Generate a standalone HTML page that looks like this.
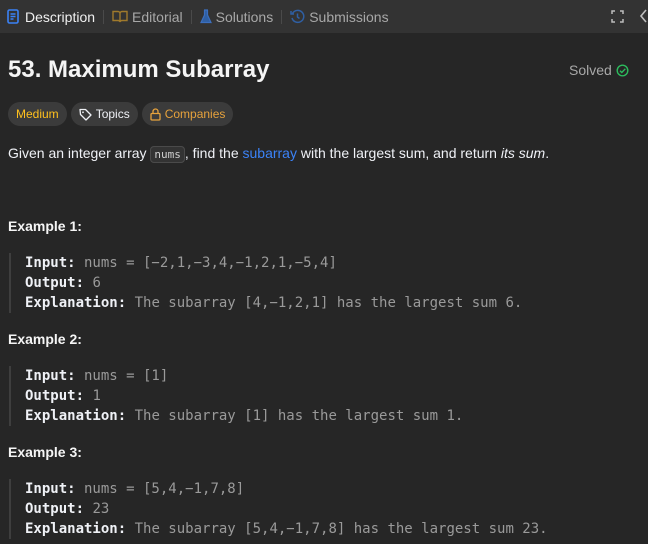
<!DOCTYPE html>
<html><head><meta charset="utf-8"><style>
*{margin:0;padding:0;box-sizing:border-box}
body{width:648px;height:544px;overflow:hidden;background:#262626;font-family:"Liberation Sans",sans-serif;color:#eff1f6}
.top{position:absolute;left:0;top:0;width:648px;height:33px;background:#333333;display:flex;align-items:center;font-size:14px}
.tab{display:flex;align-items:center;gap:4px;color:#a8a8a8}
.sep{width:1px;height:14px;background:#4a4a4a;margin:0 8px}
h1{position:absolute;left:8px;top:56px;font-size:24px;font-weight:bold;color:#f5f5f5}
.solved{position:absolute;left:569px;top:62px;font-size:14px;color:#a8a8a8;display:flex;align-items:center;gap:4px}
.tags{position:absolute;left:8px;top:102px;display:flex;gap:4px}
.tag{height:24px;border-radius:12px;background:#3b3b3b;font-size:12px;padding:0 8px;display:flex;align-items:center;gap:4px}
p.d{position:absolute;left:8px;top:145px;font-size:14px;color:#eff1f6}
code.i{font-family:"DejaVu Sans Mono",monospace;font-size:11px;background:#333;border:1px solid #4a4a4a;border-radius:4px;padding:1px 3px;color:#d0d0d0}
.ex{position:absolute;left:8px;font-size:14px;font-weight:bold;color:#f5f5f5}
.pre{position:absolute;left:9px;border-left:2px solid #3e3e3e;padding-left:14px;font-family:"DejaVu Sans Mono",monospace;font-size:14px;line-height:20px;color:#9a9a9a;white-space:pre}
.pre b{color:#eff1f6}
</style></head><body>
<div class="top">
 <div class="tab" style="margin-left:7px;color:#f0f0f0">
  <svg width="12" height="15" viewBox="0 0 12 15"><rect x="1" y="1" width="10" height="13" rx="1.5" fill="none" stroke="#3b82f6" stroke-width="1.6"/><path d="M3.5 5h5M3.5 7.5h5M3.5 10h3" stroke="#3b82f6" stroke-width="1.4"/></svg>
  <span style="margin-left:2px">Description</span></div>
 <div class="sep"></div>
 <div class="tab"><svg width="16" height="13" viewBox="0 0 16 13"><path d="M1 1.5h5a2 2 0 0 1 2 2V12a2 2 0 0 0-2-1.5H1zM15 1.5h-5a2 2 0 0 0-2 2V12a2 2 0 0 1 2-1.5h5z" fill="none" stroke="#a07a2c" stroke-width="1.4"/></svg>Editorial</div>
 <div class="sep"></div>
 <div class="tab"><svg width="12" height="15" viewBox="0 0 12 15"><path d="M4 1h4M4.5 1v5L1 13.5h10L7.5 6V1" fill="#2f5fa3" stroke="#3b6fbf" stroke-width="1.2"/></svg>Solutions</div>
 <div class="sep"></div>
 <div class="tab"><svg width="15" height="15" viewBox="0 0 15 15"><path d="M2.5 4.5A6 6 0 1 1 2 9" fill="none" stroke="#2f5fa3" stroke-width="1.5"/><path d="M1 2v3h3" fill="none" stroke="#2f5fa3" stroke-width="1.5"/><path d="M7.5 4.5v3.5l2 1.5" fill="none" stroke="#2f5fa3" stroke-width="1.5"/></svg>Submissions</div>
 <svg style="position:absolute;left:611px;top:10px" width="13" height="13" viewBox="0 0 13 13"><path d="M1 4V1h3M9 1h3v3M12 9v3H9M4 12H1V9" fill="none" stroke="#bdbdbd" stroke-width="1.5"/></svg>
 <svg style="position:absolute;left:639px;top:9px" width="9" height="14" viewBox="0 0 9 14"><path d="M7 1L2 7l5 6" fill="none" stroke="#bdbdbd" stroke-width="1.6"/></svg>
</div>
<h1>53. Maximum Subarray</h1>
<div class="solved">Solved <svg width="13" height="13" viewBox="0 0 13 13"><circle cx="6.5" cy="6.5" r="5.3" fill="none" stroke="#2cbb5d" stroke-width="1.4"/><path d="M4 6.7l1.8 1.8L9.3 4.8" fill="none" stroke="#2cbb5d" stroke-width="1.4"/></svg></div>
<div class="tags">
 <div class="tag" style="color:#ffc01e">Medium</div>
 <div class="tag" style="color:#eff1f6"><svg width="13" height="13" viewBox="0 0 13 13"><path d="M1 1.5h5.5l5.5 5.5-5 5L1.5 6.5z" fill="none" stroke="#eff1f6" stroke-width="1.3" stroke-linejoin="round"/><circle cx="4" cy="4.3" r="0.9" fill="#eff1f6"/></svg>Topics</div>
 <div class="tag" style="color:#e6a23c"><svg width="11" height="13" viewBox="0 0 11 13"><rect x="1" y="5.5" width="9" height="6.5" rx="1" fill="none" stroke="#e6a23c" stroke-width="1.3"/><path d="M3 5.5V3.5a2.5 2.5 0 0 1 5 0v2" fill="none" stroke="#e6a23c" stroke-width="1.3"/></svg>Companies</div>
</div>
<p class="d">Given an integer array <code class="i">nums</code>, find the <span style="color:#3b82f6">subarray</span> with the largest sum, and return <i>its sum</i>.</p>
<div class="ex" style="top:218px">Example 1:</div>
<div class="pre" style="top:253px"><b>Input:</b> nums = [−2,1,−3,4,−1,2,1,−5,4]
<b>Output:</b> 6
<b>Explanation:</b> The subarray [4,−1,2,1] has the largest sum 6.</div>
<div class="ex" style="top:331px">Example 2:</div>
<div class="pre" style="top:366px"><b>Input:</b> nums = [1]
<b>Output:</b> 1
<b>Explanation:</b> The subarray [1] has the largest sum 1.</div>
<div class="ex" style="top:444px">Example 3:</div>
<div class="pre" style="top:479px"><b>Input:</b> nums = [5,4,−1,7,8]
<b>Output:</b> 23
<b>Explanation:</b> The subarray [5,4,−1,7,8] has the largest sum 23.</div>
</body></html>
